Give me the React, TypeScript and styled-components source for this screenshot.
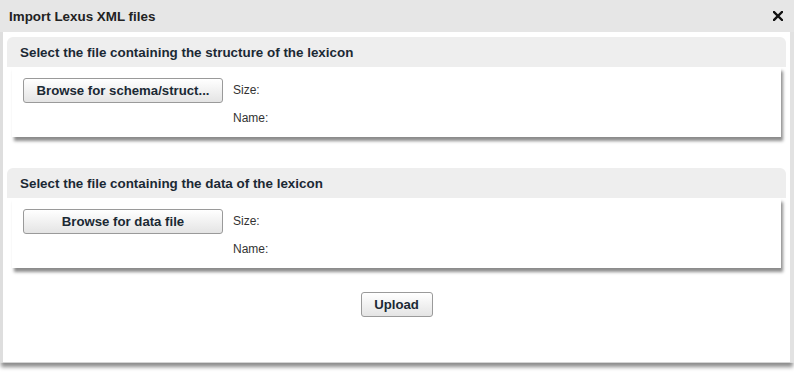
import React from "react";
import styled, { createGlobalStyle } from "styled-components";

const Global = createGlobalStyle`
  html, body { margin: 0; padding: 0; background: #ffffff; }
  body { font-family: "Liberation Sans", Arial, sans-serif; }
`;

const Dialog = styled.div`
  width: 794px;
  display: flex;
  flex-direction: column;
  padding-bottom: 10px;
`;

const TitleBar = styled.div`
  height: 32px;
  background: #e6e6e6;
  display: flex;
  align-items: center;
  justify-content: space-between;
  padding: 0 11px 0 9px;
  box-sizing: border-box;
`;

const Title = styled.span`
  font-size: 13.4px;
  font-weight: bold;
  color: #222;
`;

const Close = styled.button`
  border: 0;
  background: none;
  padding: 0;
  width: 10px;
  height: 10px;
  display: flex;
  cursor: pointer;
`;

const Body = styled.div`
  height: 331px;
  flex: none;
  box-sizing: border-box;
  background: #fff;
  border-left: 3px solid #dedede;
  border-right: 4px solid #e2e2e2;
  border-bottom: 1px solid #d4d4d4;
  padding: 5px 4px 0 4px;
  display: flex;
  flex-direction: column;
  box-shadow: 0 5px 4px -1px rgba(0, 0, 0, 0.45);
`;

const Panel = styled.section<{ $gap: number }>`
  margin-bottom: ${(p) => p.$gap}px;
`;

const PanelHeader = styled.div`
  height: 30px;
  background: #eeeeee;
  border-radius: 6px 6px 0 0;
  display: flex;
  align-items: center;
  padding-left: 13px;
  font-size: 13.4px;
  font-weight: bold;
  color: #1b2934;
`;

const PanelContent = styled.div`
  margin: 0 5px;
  background: #fff;
  padding: 11px 11px 6px;
  display: flex;
  gap: 10px;
  box-shadow: 2px 4px 3px rgba(0, 0, 0, 0.45);
`;

const Button = styled.button<{ $width: number }>`
  width: ${(p) => p.$width}px;
  height: 25px;
  border: 1px solid #9a9a9a;
  border-radius: 3px;
  background: linear-gradient(#ffffff, #e4e4e4);
  font-family: "Liberation Sans", Arial, sans-serif;
  font-size: 13.2px;
  font-weight: bold;
  color: #1b2934;
  padding: 0;
  cursor: pointer;
  white-space: nowrap;
`;

const Info = styled.div`
  display: flex;
  flex-direction: column;
  gap: 3px;
`;

const InfoLabel = styled.div`
  height: 25px;
  line-height: 25px;
  font-size: 12px;
  color: #333;
`;

const Actions = styled.div`
  display: flex;
  justify-content: center;
  padding-top: 1px;
`;

const FilePanel = ({ title, button, gap }: { title: string; button: string; gap: number }) => (
  <Panel $gap={gap}>
    <PanelHeader>{title}</PanelHeader>
    <PanelContent>
      <Button $width={200}>{button}</Button>
      <Info>
        <InfoLabel>Size:</InfoLabel>
        <InfoLabel>Name:</InfoLabel>
      </Info>
    </PanelContent>
  </Panel>
);

export default function App() {
  return (
    <>
      <Global />
      <Dialog>
        <TitleBar>
          <Title>Import Lexus XML files</Title>
          <Close aria-label="close">
            <svg width="10" height="10" viewBox="0 0 10 10">
              <path d="M1 1 L9 9 M9 1 L1 9" stroke="#111" strokeWidth="2.4" strokeLinecap="square" />
            </svg>
          </Close>
        </TitleBar>
        <Body>
          <FilePanel
            title="Select the file containing the structure of the lexicon"
            button="Browse for schema/struct..."
            gap={31}
          />
          <FilePanel
            title="Select the file containing the data of the lexicon"
            button="Browse for data file"
            gap={23}
          />
          <Actions>
            <Button $width={72}>Upload</Button>
          </Actions>
        </Body>
      </Dialog>
    </>
  );
}
